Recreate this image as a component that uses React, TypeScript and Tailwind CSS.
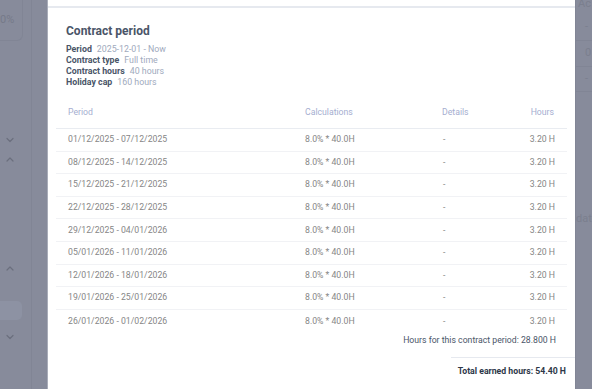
import React from "react";

const rows = [
  "01/12/2025 - 07/12/2025",
  "08/12/2025 - 14/12/2025",
  "15/12/2025 - 21/12/2025",
  "22/12/2025 - 28/12/2025",
  "29/12/2025 - 04/01/2026",
  "05/01/2026 - 11/01/2026",
  "12/01/2026 - 18/01/2026",
  "19/01/2026 - 25/01/2026",
  "26/01/2026 - 01/02/2026",
];

const info: [string, string][] = [
  ["Period", "2025-12-01 - Now"],
  ["Contract type", "Full time"],
  ["Contract hours", "40 hours"],
  ["Holiday cap", "160 hours"],
];

function Chevron({ up }: { up?: boolean }) {
  return (
    <svg width="10" height="6" viewBox="0 0 10 6" fill="none">
      <path
        d={up ? "M2 5 L5 2 L8 5" : "M2 1.5 L5 4.5 L8 1.5"}
        stroke="#6b6f7e"
        strokeWidth="1.2"
        strokeLinecap="round"
        strokeLinejoin="round"
      />
    </svg>
  );
}

const cols = "grid grid-cols-[237px_137px_71px_66px] items-center";

export default function App() {
  return (
    <div
      className="w-[592px] h-[389px] overflow-hidden flex bg-[#878b9b] text-[8.7px]"
      style={{ fontFamily: "Roboto, 'Liberation Sans', sans-serif" }}
    >
      {/* left background */}
      <div className="w-[47px] shrink-0 flex">
        <div className="w-[32px] border-r border-[#818595] flex flex-col">
          <div className="h-[41px] w-[23px] border-r border-b border-[#818595] rounded-br-[6px] flex items-center text-[11px] text-[#767a89]">
            0%
          </div>
          <div className="pl-[5px] pt-[96px] flex flex-col gap-[13px]">
            <Chevron />
            <Chevron up />
          </div>
          <div className="pl-[5px] pt-[103px]">
            <Chevron up />
          </div>
          <div className="mt-[30px] w-[22px] h-[19px] rounded-r-[5px] bg-[#8d92a3]" />
          <div className="pl-[5px] pt-[14px]">
            <Chevron />
          </div>
        </div>
      </div>

      {/* modal */}
      <div className="w-[528px] shrink-0 bg-white border-l border-[#a9adb9] flex flex-col">
        <div className="h-[8px] border-b-2 border-[#e6e9ef]" />
        <div className="px-[8px]">
          <div className="pl-[10px] pt-[14px]">
            <div className="text-[12px] leading-[18px] font-bold text-[#4a5568]">Contract period</div>
            <div className="mt-[4px] text-[8.8px] leading-[11px]">
              {info.map(([k, v]) => (
                <div key={k} className="flex gap-[5px]">
                  <span className="font-bold text-[#4a5568]">{k}</span>
                  <span className="text-[#a0aabd]">{v}</span>
                </div>
              ))}
            </div>
          </div>

          <div className="mt-[10px]">
            <div className={cols + " h-[31px] border-b border-[#e9ecf1] text-[#a5aed0]"}>
              <div className="pl-[12px]">Period</div>
              <div className="pl-[12px]">Calculations</div>
              <div className="pl-[12px]">Details</div>
              <div className="pr-[13px] text-right">Hours</div>
            </div>
            {rows.map((r, i) => (
              <div
                key={r}
                className={
                  cols +
                  " h-[22.6px] text-[#868686] " +
                  (i < rows.length - 1 ? "border-b border-[#f1f2f5]" : "")
                }
              >
                <div className="pl-[12px]">{r}</div>
                <div className="pl-[12px]">8.0% * 40.0H</div>
                <div className="pl-[13px]">-</div>
                <div className="pr-[12px] text-right">3.20 H</div>
              </div>
            ))}
            <div className="h-[17px] flex items-center justify-end pr-[11px] text-[#4a5568]">
              Hours for this contract period: 28.800 H
            </div>
          </div>
        </div>
        <div className="mt-[8px] flex justify-end">
          <div className="w-[124px] border-t border-[#e6e9ef]" />
        </div>
        <div className="h-[27px] flex items-center justify-end pr-[9px] font-bold text-[#2d3748]">
          Total earned hours: 54.40 H
        </div>
      </div>

      {/* right background */}
      <div className="flex-1 border-l border-[#818595] flex flex-col text-[11px] text-[#7b7f8e] overflow-hidden">
        <div className="h-[14px] pl-[2px] leading-[8px] whitespace-nowrap">Ac</div>
        <div className="h-[26px] pl-[9px] flex items-center">-</div>
        <div className="h-[26px] pl-[9px] flex items-center border-t border-[#818595]">0</div>
        <div className="h-[26px] pl-[9px] flex items-center border-t border-[#818595] border-b">-</div>
        <div className="mt-[120px] whitespace-nowrap leading-[14px]">date</div>
      </div>
    </div>
  );
}
